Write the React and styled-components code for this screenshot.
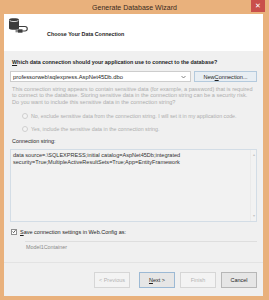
import React from 'react';
import styled, { createGlobalStyle } from 'styled-components';

const GlobalStyle = createGlobalStyle`
    html, body {
        margin: 0;
        padding: 0;
        background: #e9b17c;
    }
    * {
        box-sizing: border-box;
    }
`

const Frame = styled.div`
    width: 269px;
    height: 300px;
    background: #e9b17c;
    display: flex;
    flex-direction: column;
    font-family: "Liberation Sans", Arial, sans-serif;
    color: #1e1e1e;
    overflow: hidden;
`
const TitleBar = styled.div`
    height: 14px;
    position: relative;
    display: flex;
    align-items: center;
    justify-content: center;
    font-size: 7px;
    color: #3a2a1c;
`
const CloseBtn = styled.div`
    position: absolute;
    top: 0;
    right: 4px;
    width: 14px;
    height: 12px;
    background: #c94f4b;
    color: #fff;
    font-size: 7px;
    display: flex;
    align-items: center;
    justify-content: center;
`
const Client = styled.div`
    flex: 1;
    margin: 0 6px 4px 4px;
    display: flex;
    flex-direction: column;
    background: #f0f0f0;
`
const Header = styled.div`
    height: 37px;
    background: #ffffff;
    display: flex;
    align-items: flex-start;
`
const HeaderIcon = styled.svg`
    margin: 3px 0 0 1px;
    flex-shrink: 0;
`
const HeaderTitle = styled.div`
    font-size: 5.4px;
    font-weight: bold;
    margin: 16px 0 0 16px;
    line-height: 8px;
`
const Body = styled.div`
    flex: 1;
    display: flex;
    flex-direction: column;
    padding: 7px 6px 0 6px;
`
const Label = styled.div`
    font-size: 5.4px;
    line-height: 8px;
    padding-left: 2px;
    font-weight: ${p => (p.bold ? 'bold' : 'normal')};
    margin-top: ${p => p.top || 0}px;
    white-space: nowrap;
`
const Key = styled.span`
    text-decoration: underline;
`
const Row = styled.div`
    display: flex;
    align-items: stretch;
    gap: 3px;
    margin-top: 5px;
    height: 11px;
`
const Select = styled.div`
    flex: 1;
    background: #ffffff;
    border: 1px solid #cdcdcd;
    display: flex;
    align-items: center;
    justify-content: space-between;
    padding: 0 3px 0 2px;
    font-size: 5.8px;
`
const Chevron = styled.svg`
    margin-right: 1px;
`
const SideButton = styled.div`
    width: 63px;
    background: #e8eef3;
    border: 1px solid #b4cadd;
    display: flex;
    align-items: center;
    justify-content: center;
    font-size: 5.6px;
`
const Notice = styled.div`
    margin-top: 3.6px;
    padding-left: 2px;
    font-size: 5.55px;
    line-height: 6.7px;
    color: #adadad;
    white-space: nowrap;
`
const RadioList = styled.div`
    display: flex;
    flex-direction: column;
    gap: 5.5px;
    margin-top: 6.2px;
    padding-left: 12px;
`
const RadioRow = styled.div`
    display: flex;
    align-items: center;
    gap: 3px;
    height: 8px;
    font-size: 5.3px;
    color: #adadad;
    white-space: nowrap;
`
const RadioDot = styled.span`
    width: 6px;
    height: 6px;
    border-radius: 50%;
    border: 1px solid #cfcfcf;
    background: #f4f4f4;
    flex-shrink: 0;
`
const TextArea = styled.div`
    margin-top: 4px;
    height: 73px;
    border: 1px solid #d3dde6;
    background: #f2f2f2;
    display: flex;
    padding: 2px 0 0 2px;
`
const AreaText = styled.div`
    flex: 1;
    font-size: 5.55px;
    line-height: 7.5px;
    color: #333;
`
const ScrollBar = styled.div`
    width: 6px;
    border-left: 1px solid #eaeaea;
    margin-top: -2px;
    display: flex;
    flex-direction: column;
    justify-content: space-between;
    align-items: center;
    padding: 3px 0;
    color: #c4c4c4;
    font-size: 4px;
    line-height: 4px;
`
const CheckRow = styled.div`
    display: flex;
    align-items: center;
    gap: 3px;
    margin-top: 6px;
    height: 8px;
    padding-left: 1px;
    font-size: 5.5px;
`
const CheckBox = styled.span`
    width: 6px;
    height: 6px;
    border: 1px solid #8f8f8f;
    background: #fff;
    display: flex;
    align-items: center;
    justify-content: center;
`
const NameInput = styled.div`
    margin: 5px 0 0 15px;
    height: 12px;
    border-top: 1px solid #dedede;
    display: flex;
    align-items: center;
    padding-left: 1px;
    font-size: 5.4px;
    color: #8a8a8a;
`
const Footer = styled.div`
    margin: auto -6px 0 -6px;
    height: 34px;
    border-top: 1px solid #e3e3e3;
    display: flex;
    justify-content: flex-end;
    align-items: flex-start;
    padding: 9px 6px 0 0;
`
const Button = styled.div`
    width: 36px;
    height: 16px;
    margin-left: ${p => p.gap || 5}px;
    border: 1px solid ${p => (p.disabled ? '#d6d6d6' : p.primary ? '#9cb9d4' : '#b7b7b7')};
    background: ${p => (p.disabled ? '#f3f3f3' : '#e6e6e6')};
    color: ${p => (p.disabled ? '#b4b4b4' : '#1e1e1e')};
    display: flex;
    align-items: center;
    justify-content: center;
    font-size: 5.5px;
`

const DbIcon = () => (
    <HeaderIcon width="26" height="18" viewBox="0 0 26 18">
        <path d="M4 2.5 C4 0.8 14 0.8 14 2.5 L14 11.5 C14 13.2 4 13.2 4 11.5 Z" fill="#3c3c3c" />
        <path d="M4.6 3.6 C6 4.9 12 4.9 13.4 3.6" stroke="#ffffff" strokeWidth="0.8" fill="none" />
        <path d="M14 9.5 L20 9.5 C23 9.5 23 14 20 14 L17 14" stroke="#3c3c3c" strokeWidth="1.1" fill="none" />
        <rect x="13" y="12.3" width="4.5" height="3.4" fill="#3c3c3c" />
        <rect x="10.5" y="12.8" width="2.5" height="0.8" fill="#3c3c3c" />
        <rect x="10.5" y="14.4" width="2.5" height="0.8" fill="#3c3c3c" />
    </HeaderIcon>
)

const App = () => {
    return (
        <Frame>
            <GlobalStyle />
            <TitleBar>
                Generate Database Wizard
                <CloseBtn>✕</CloseBtn>
            </TitleBar>
            <Client>
                <Header>
                    <DbIcon />
                    <HeaderTitle>Choose Your Data Connection</HeaderTitle>
                </Header>
                <Body>
                    <Label bold><Key>W</Key>hich data connection should your application use to connect to the database?</Label>
                    <Row>
                        <Select>
                            <span>professorweb\sqlexpress.AspNet45Db.dbo</span>
                            <Chevron width="5" height="4" viewBox="0 0 5 4">
                                <path d="M0.5 1 L2.5 3 L4.5 1" stroke="#555" strokeWidth="0.7" fill="none" />
                            </Chevron>
                        </Select>
                        <SideButton>New <Key>C</Key>onnection...</SideButton>
                    </Row>
                    <Notice>
                        This connection string appears to contain sensitive data (for example, a password) that is required<br />
                        to connect to the database. Storing sensitive data in the connection string can be a security risk.<br />
                        Do you want to include this sensitive data in the connection string?
                    </Notice>
                    <RadioList>
                        <RadioRow><RadioDot />No, exclude sensitive data from the connection string. I will set it in my application code.</RadioRow>
                        <RadioRow><RadioDot />Yes, include the sensitive data in the connection string.</RadioRow>
                    </RadioList>
                    <Label top={3.5}>Connection string:</Label>
                    <TextArea>
                        <AreaText>
                            data source=.\SQLEXPRESS;initial catalog=AspNet45Db;integrated<br />
                            security=True;MultipleActiveResultSets=True;App=EntityFramework
                        </AreaText>
                        <ScrollBar>
                            <span>▴</span>
                            <span>▾</span>
                        </ScrollBar>
                    </TextArea>
                    <CheckRow>
                        <CheckBox>
                            <svg width="5" height="5" viewBox="0 0 5 5">
                                <path d="M0.7 2.6 L2 3.9 L4.4 0.9" stroke="#222" strokeWidth="0.9" fill="none" />
                            </svg>
                        </CheckBox>
                        <span><Key>S</Key>ave connection settings in Web.Config as:</span>
                    </CheckRow>
                    <NameInput>Model1Container</NameInput>
                    <Footer>
                        <Button disabled>&lt; Previous</Button>
                        <Button primary gap={9}><span><Key>N</Key>ext &gt;</span></Button>
                        <Button disabled>Finish</Button>
                        <Button>Cancel</Button>
                    </Footer>
                </Body>
            </Client>
        </Frame>
    );
}

export default App;
